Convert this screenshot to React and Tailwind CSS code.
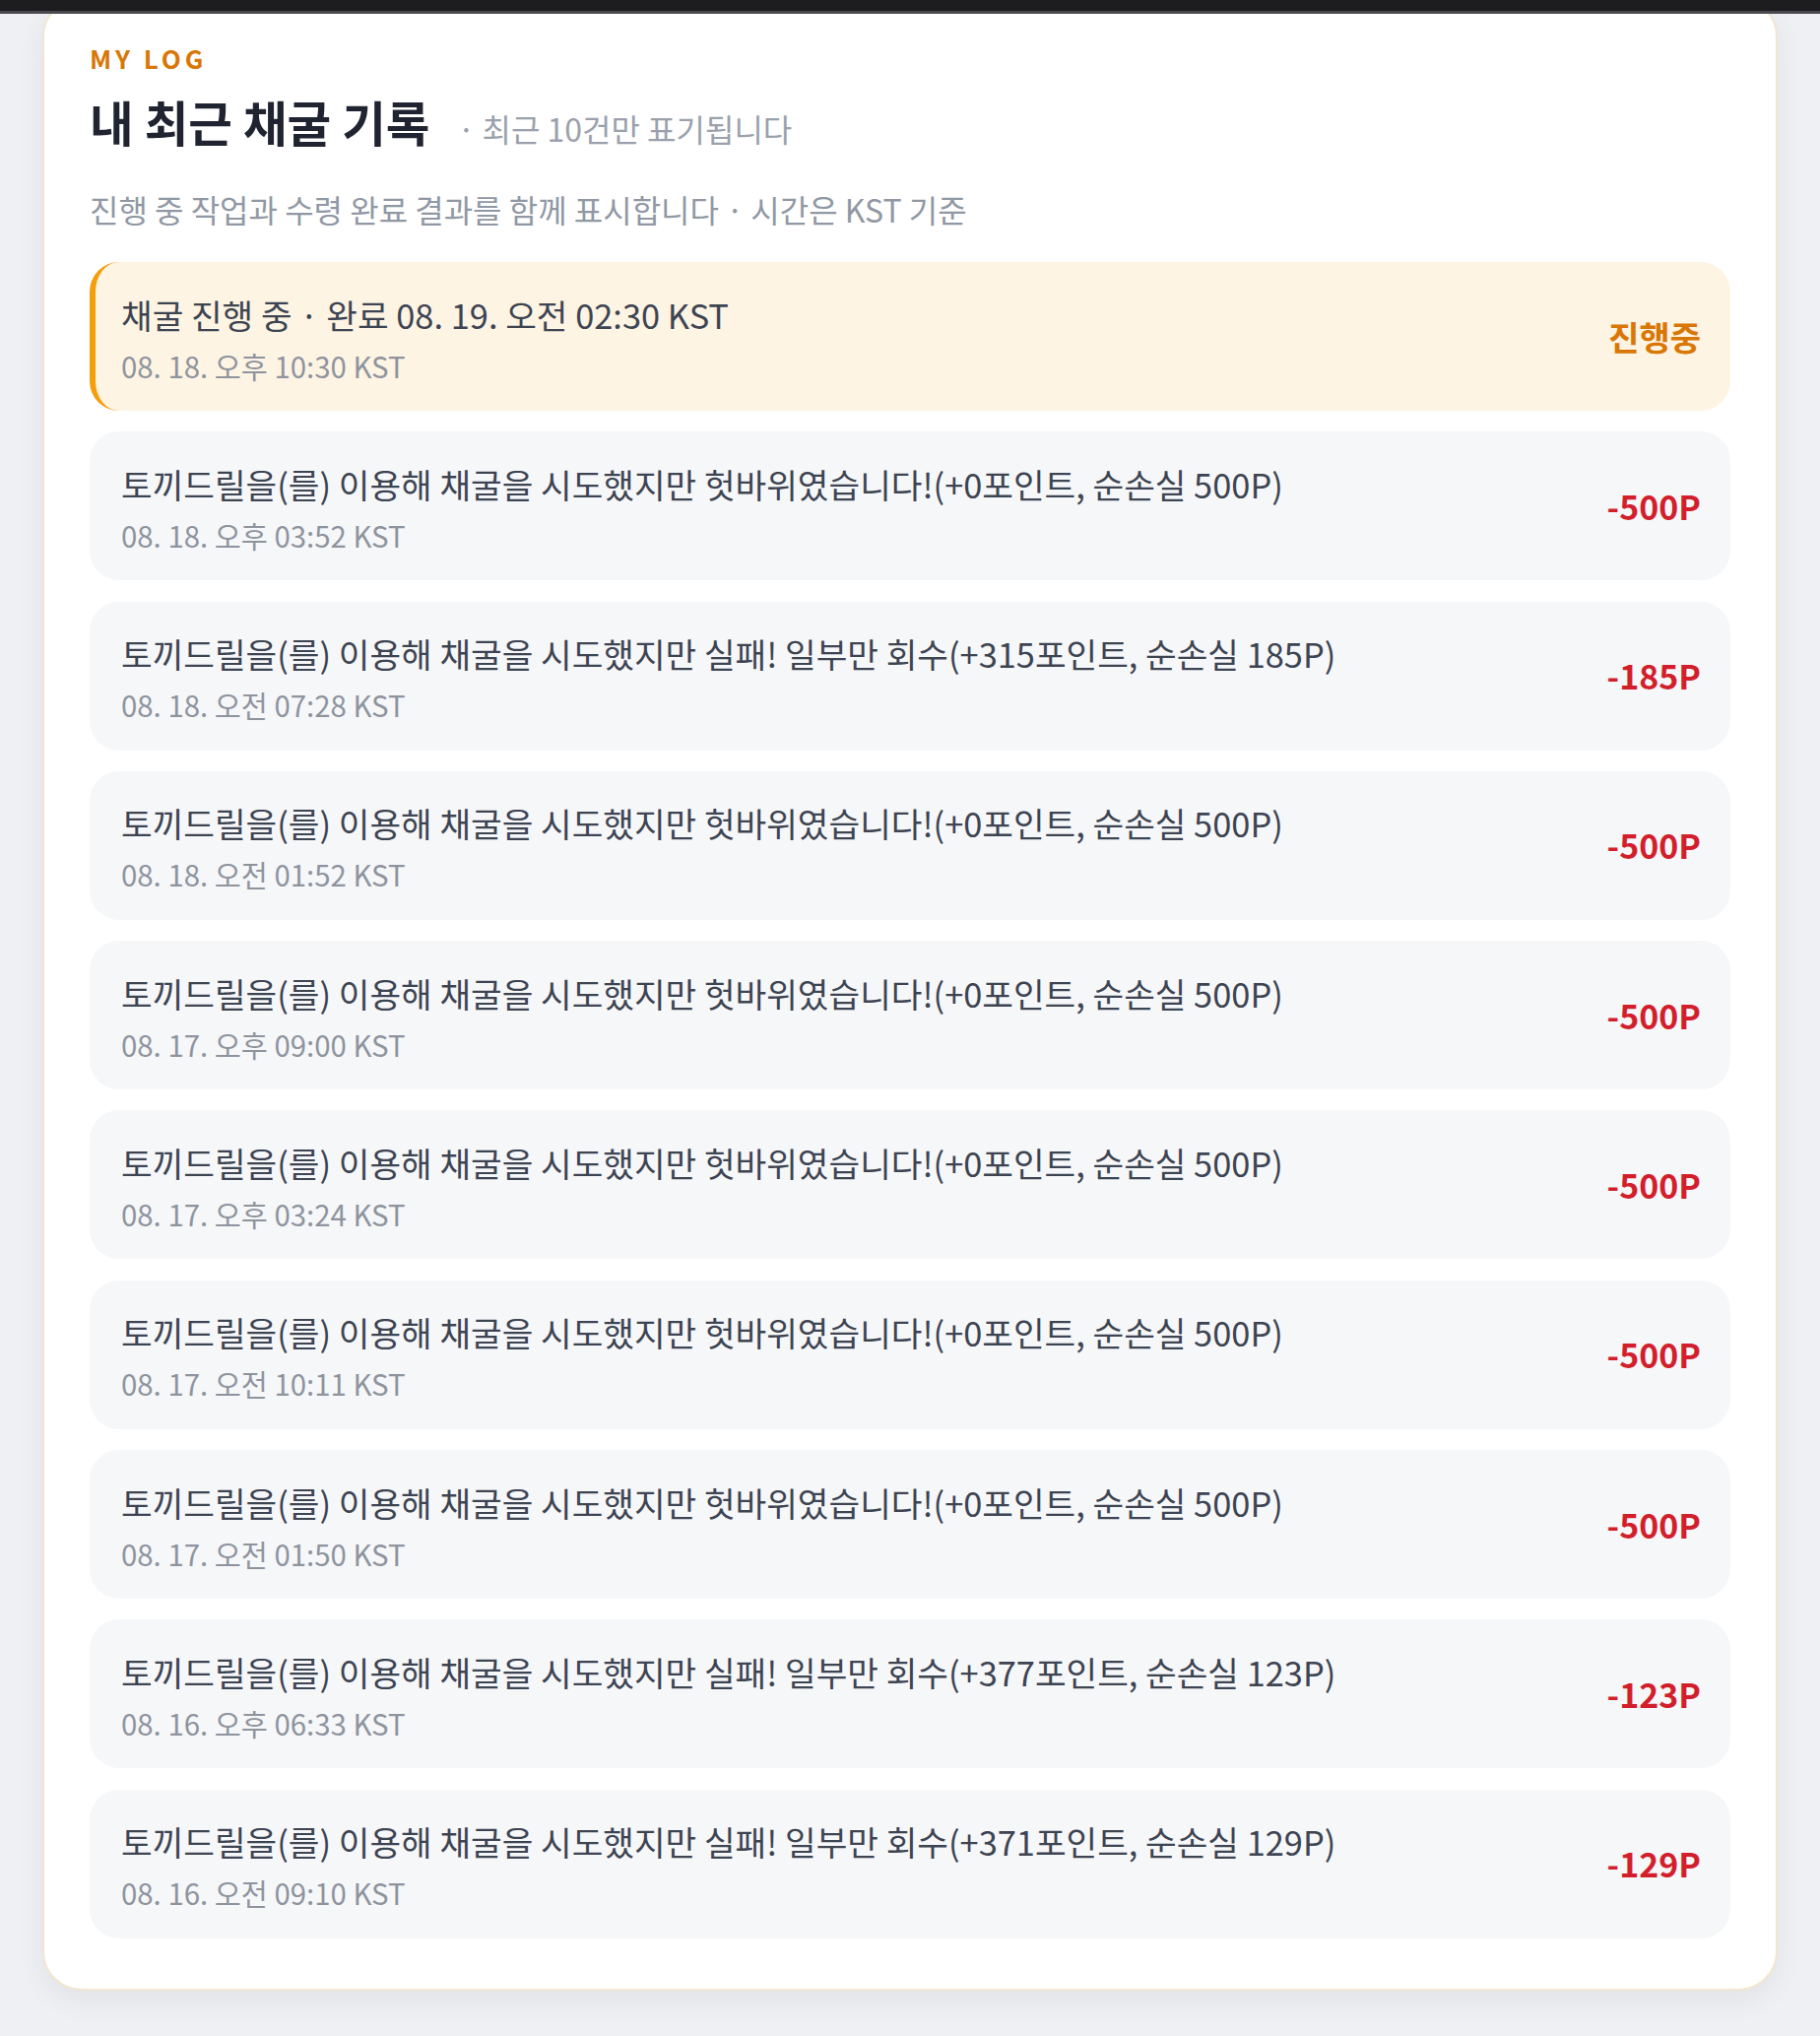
import React from "react";

const rows = [
  { text: "토끼드릴을(를) 이용해 채굴을 시도했지만 헛바위였습니다!(+0포인트, 순손실 500P)", time: "08. 18. 오후 03:52 KST", amount: "-500P" },
  { text: "토끼드릴을(를) 이용해 채굴을 시도했지만 실패! 일부만 회수(+315포인트, 순손실 185P)", time: "08. 18. 오전 07:28 KST", amount: "-185P" },
  { text: "토끼드릴을(를) 이용해 채굴을 시도했지만 헛바위였습니다!(+0포인트, 순손실 500P)", time: "08. 18. 오전 01:52 KST", amount: "-500P" },
  { text: "토끼드릴을(를) 이용해 채굴을 시도했지만 헛바위였습니다!(+0포인트, 순손실 500P)", time: "08. 17. 오후 09:00 KST", amount: "-500P" },
  { text: "토끼드릴을(를) 이용해 채굴을 시도했지만 헛바위였습니다!(+0포인트, 순손실 500P)", time: "08. 17. 오후 03:24 KST", amount: "-500P" },
  { text: "토끼드릴을(를) 이용해 채굴을 시도했지만 헛바위였습니다!(+0포인트, 순손실 500P)", time: "08. 17. 오전 10:11 KST", amount: "-500P" },
  { text: "토끼드릴을(를) 이용해 채굴을 시도했지만 헛바위였습니다!(+0포인트, 순손실 500P)", time: "08. 17. 오전 01:50 KST", amount: "-500P" },
  { text: "토끼드릴을(를) 이용해 채굴을 시도했지만 실패! 일부만 회수(+377포인트, 순손실 123P)", time: "08. 16. 오후 06:33 KST", amount: "-123P" },
  { text: "토끼드릴을(를) 이용해 채굴을 시도했지만 실패! 일부만 회수(+371포인트, 순손실 129P)", time: "08. 16. 오전 09:10 KST", amount: "-129P" },
];

function Row({ text, time, amount, active }) {
  return (
    <div
      className={
        "flex h-[151px] items-center justify-between rounded-[30px] border-l-[6px] pl-[26px] pr-[30px] " +
        (active ? "border-[#f59e0b] bg-[#fef4e3]" : "border-transparent bg-[#f6f7f9]")
      }
    >
      <div className="flex flex-col pt-[3px]">
        <div className="text-[34.4px] leading-[44px] text-[#3d4452]">{text}</div>
        <div className="mt-[11px] text-[29.4px] leading-[38px] text-[#8e949e]">{time}</div>
      </div>
      <div
        className={
          "text-[34px] font-bold leading-[44px] " + (active ? "text-[#d97706]" : "text-[#d31f2c]")
        }
      >
        {amount}
      </div>
    </div>
  );
}

export default function App() {
  return (
    <div
      className="relative h-[2067px] overflow-hidden bg-[#eef0f3]"
      style={{ fontFamily: '"Noto Sans CJK KR", "Noto Sans", sans-serif' }}
    >
      <div className="absolute left-0 right-0 top-0 z-10 h-[14px] border-b-[3px] border-[#4a4a4e] bg-[#1d1d1f]" />
      <div className="mx-[43px] -mt-[3px] rounded-[40px] border-2 border-[#f3e6cf] bg-white px-[46px] pb-[51px] pt-[44px] shadow-[0_10px_30px_rgba(17,24,39,0.06)]">
        <div className="text-[26px] font-bold leading-[32px] tracking-[0.15em] text-[#d97706]">MY LOG</div>
        <div className="mt-[20px] flex items-baseline">
          <h1 className="text-[48.5px] font-bold leading-[56px] text-[#1f2430]">내 최근 채굴 기록</h1>
          <span className="ml-[28px] text-[32px] leading-[56px] text-[#9aa1ac]">· 최근 10건만 표기됩니다</span>
        </div>
        <div className="mt-[34px] text-[32px] leading-[40px] text-[#9098a4]">
          진행 중 작업과 수령 완료 결과를 함께 표시합니다 · 시간은 KST 기준
        </div>
        <div className="mt-[34px] flex flex-col gap-[21.3px]">
          <Row active text="채굴 진행 중 · 완료 08. 19. 오전 02:30 KST" time="08. 18. 오후 10:30 KST" amount="진행중" />
          {rows.map((r, i) => (
            <Row key={i} {...r} />
          ))}
        </div>
      </div>
      <div className="mx-[43px] mt-[46px] h-[200px] rounded-[40px] border-2 border-[#e5e7eb] bg-[#f3f4f6]" />
    </div>
  );
}
